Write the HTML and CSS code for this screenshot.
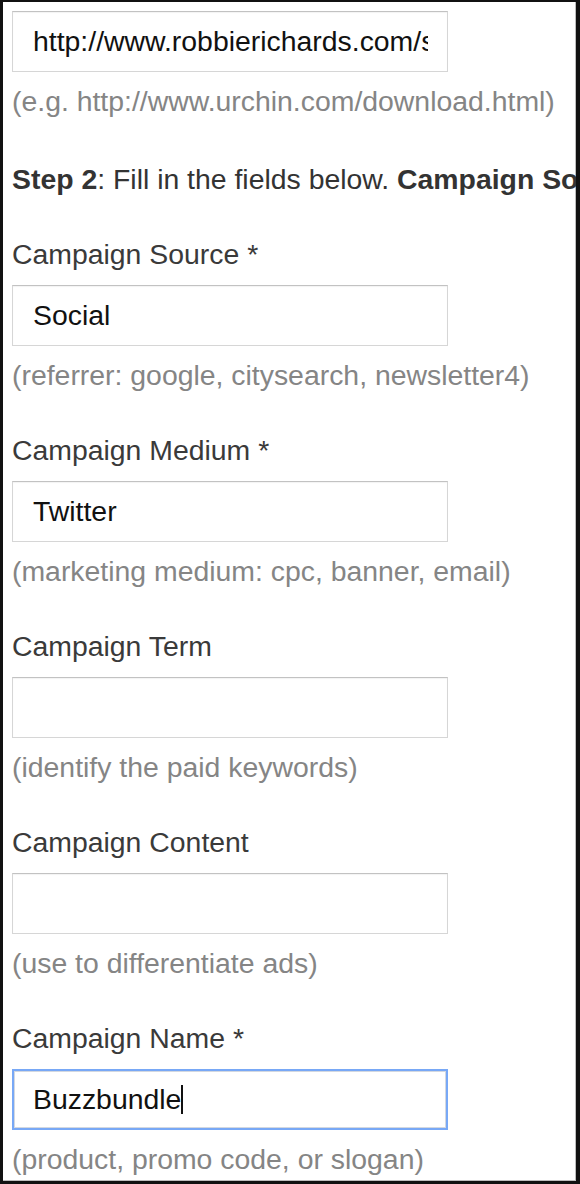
FILE: index.html
```html
<!DOCTYPE html>
<html>
<head>
<meta charset="utf-8">
<link rel="stylesheet" href="styles.css">
</head>
<body>
<div class="frame">
  <div class="field first">
    <div class="box"><span class="clip">http://www.robbierichards.com/social-media-tracking</span></div>
    <div class="hint">(e.g. http://www.urchin.com/download.html)</div>
  </div>
  <p class="step"><b>Step 2</b>: Fill in the fields below. <b>Campaign Source</b>, <b>Campaign Medium</b> and <b>Campaign Name</b> should always be used.</p>
  <div class="field">
    <div class="label">Campaign Source *</div>
    <div class="box">Social</div>
    <div class="hint">(referrer: google, citysearch, newsletter4)</div>
  </div>
  <div class="field">
    <div class="label">Campaign Medium *</div>
    <div class="box">Twitter</div>
    <div class="hint">(marketing medium: cpc, banner, email)</div>
  </div>
  <div class="field">
    <div class="label">Campaign Term</div>
    <div class="box"></div>
    <div class="hint">(identify the paid keywords)</div>
  </div>
  <div class="field">
    <div class="label">Campaign Content</div>
    <div class="box"></div>
    <div class="hint">(use to differentiate ads)</div>
  </div>
  <div class="field">
    <div class="label">Campaign Name *</div>
    <div class="box focus">Buzzbundle<span class="caret"></span></div>
    <div class="hint">(product, promo code, or slogan)</div>
  </div>
</div>
</body>
</html>
```

FILE: styles.css
```css
html, body {
  margin: 0;
  padding: 0;
  background: #fff;
}
.frame {
  box-sizing: border-box;
  width: 580px;
  height: 1184px;
  border-left: 3px solid #111;
  border-top: 2px solid #111;
  border-right: 4px solid #111;
  border-bottom: 3px solid #111;
  box-shadow: inset -1px 0 0 #bdbdbd, inset 0 -1px 0 #bdbdbd;
  padding: 9px 0 0 9px;
  overflow: hidden;
  font-family: "Liberation Sans", Arial, sans-serif;
  font-size: 28.4px;
  color: #3a3a3a;
}
.field {
  display: flex;
  flex-direction: column;
  margin-bottom: 41px;
}
.field.first {
  margin-bottom: 44px;
}
.label {
  height: 34px;
  line-height: 34px;
  white-space: nowrap;
  margin-bottom: 14px;
}
.box {
  box-sizing: border-box;
  width: 436px;
  height: 61px;
  border: 1px solid #d6d6d6;
  border-top-color: #c2c2c2;
  box-shadow: inset 0 1px 1px rgba(0,0,0,0.05);
  padding: 0 19px 0 20px;
  line-height: 59px;
  color: #111;
  white-space: nowrap;
  overflow: hidden;
  background: #fff;
}
.clip {
  display: block;
  overflow: hidden;
}
.box.focus {
  border: 2px solid #78a8f6;
  box-shadow: inset 0 0 0 1px #d3d8e0;
  padding-left: 19px;
  line-height: 57px;
}
.caret {
  display: inline-block;
  width: 2px;
  height: 29px;
  background: #111;
  vertical-align: -5px;
}
.hint {
  height: 34px;
  line-height: 34px;
  margin-top: 12px;
  color: #858585;
  white-space: nowrap;
}
.step {
  margin: 0 0 41px 0;
  height: 34px;
  line-height: 34px;
  white-space: nowrap;
  color: #333;
}
.step b {
  color: #333;
}
```
